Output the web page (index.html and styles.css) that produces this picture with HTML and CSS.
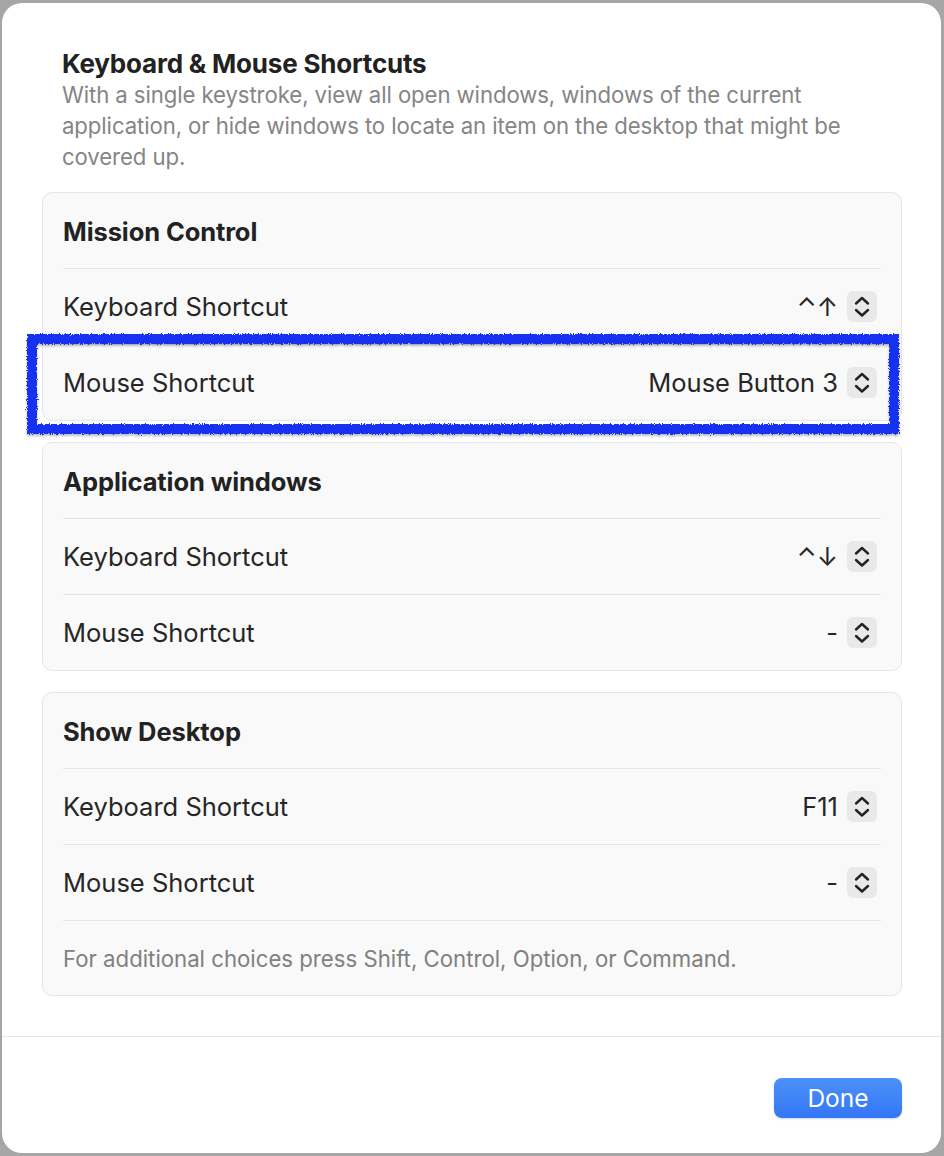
FILE: index.html
```html
<!DOCTYPE html>
<html>
<head>
<meta charset="utf-8">
<link rel="stylesheet" href="styles.css">
</head>
<body>
<svg class="defs" width="0" height="0" aria-hidden="true">
  <filter id="rough" x="-5%" y="-20%" width="110%" height="140%">
    <feTurbulence type="fractalNoise" baseFrequency="0.9" numOctaves="2" seed="3" result="noise"/>
    <feDisplacementMap in="SourceGraphic" in2="noise" scale="5" xChannelSelector="R" yChannelSelector="G"/>
  </filter>
  <symbol id="chev" viewBox="0 0 30 31">
    <path d="M9 12.5 L15 7 L21 12.5" fill="none" stroke="#222" stroke-width="2.4" stroke-linecap="round" stroke-linejoin="round"/>
    <path d="M9 19 L15 24.5 L21 19" fill="none" stroke="#222" stroke-width="2.4" stroke-linecap="round" stroke-linejoin="round"/>
  </symbol>
</svg>
<div class="dialog">
  <div class="content">
    <div class="intro">
      <h1 class="title">Keyboard &amp; Mouse Shortcuts</h1>
      <p class="desc">With a single keystroke, view all open windows, windows of the current application, or hide windows to locate an item on the desktop that might be covered up.</p>
    </div>

    <section class="group">
      <div class="row header">Mission Control</div>
      <div class="row">
        <span class="label">Keyboard Shortcut</span>
        <span class="control"><span class="value">⌃↑</span><span class="stepper"><svg width="30" height="31"><use href="#chev"/></svg></span></span>
      </div>
      <div class="row">
        <span class="label">Mouse Shortcut</span>
        <span class="control"><span class="value">Mouse Button 3</span><span class="stepper"><svg width="30" height="31"><use href="#chev"/></svg></span></span>
      </div>
    </section>

    <section class="group">
      <div class="row header">Application windows</div>
      <div class="row">
        <span class="label">Keyboard Shortcut</span>
        <span class="control"><span class="value">⌃↓</span><span class="stepper"><svg width="30" height="31"><use href="#chev"/></svg></span></span>
      </div>
      <div class="row">
        <span class="label">Mouse Shortcut</span>
        <span class="control"><span class="value">-</span><span class="stepper"><svg width="30" height="31"><use href="#chev"/></svg></span></span>
      </div>
    </section>

    <section class="group">
      <div class="row header">Show Desktop</div>
      <div class="row">
        <span class="label">Keyboard Shortcut</span>
        <span class="control"><span class="value">F11</span><span class="stepper"><svg width="30" height="31"><use href="#chev"/></svg></span></span>
      </div>
      <div class="row">
        <span class="label">Mouse Shortcut</span>
        <span class="control"><span class="value">-</span><span class="stepper"><svg width="30" height="31"><use href="#chev"/></svg></span></span>
      </div>
      <div class="row note">For additional choices press Shift, Control, Option, or Command.</div>
    </section>
  </div>

  <div class="footer">
    <button class="done">Done</button>
  </div>

  <div class="highlight"></div>
</div>
</body>
</html>
```

FILE: styles.css
```css
html, body {
  margin: 0;
  padding: 0;
}

body {
  width: 944px;
  height: 1156px;
  overflow: hidden;
  background: #a6a6a6;
  font-family: Inter, "Noto Sans", "Liberation Sans", sans-serif;
  color: #262626;
}

.defs {
  position: absolute;
  width: 0;
  height: 0;
}

.dialog {
  position: relative;
  margin: 3px 3px 0 2px;
  height: 1150px;
  background: #ffffff;
  border-radius: 20px;
  display: flex;
  flex-direction: column;
  box-sizing: border-box;
}

.content {
  padding: 45px 39px 0 40px;
  display: flex;
  flex-direction: column;
  gap: 21px;
}

.intro {
  padding: 0 20px;
  margin-bottom: -1px;
}

.title {
  margin: 0;
  font-size: 26px;
  line-height: 31px;
  font-weight: 700;
  letter-spacing: -0.2px;
  color: #222;
}

.desc {
  margin: 0;
  font-size: 22.2px;
  line-height: 31px;
  color: #858585;
  letter-spacing: -0.1px;
}

.group {
  background: #f9f9f9;
  border: 1px solid #e6e6e6;
  border-radius: 10px;
}

.row {
  margin: 0 20px;
  height: 76px;
  border-top: 1px solid #e4e4e4;
  display: flex;
  align-items: center;
  justify-content: space-between;
  font-size: 25.5px;
  color: #262626;
  box-sizing: border-box;
}

.row.header {
  height: 75px;
  border-top: none;
  font-weight: 700;
  font-size: 25.5px;
  letter-spacing: -0.1px;
  color: #222;
  padding-top: 2px;
}

.row.note {
  height: 75px;
  font-size: 22.2px;
  color: #808080;
}

.control {
  display: flex;
  align-items: center;
  gap: 9px;
  padding-right: 4px;
}

.value {
  font-size: 25.5px;
  color: #262626;
}

.stepper {
  width: 30px;
  height: 31px;
  background: #e9e9e9;
  border-radius: 6px;
  display: block;
}

.stepper svg {
  display: block;
}

.footer {
  margin-top: 40px;
  border-top: 1px solid #e8e8e8;
  padding: 41px 39px 0 0;
  display: flex;
  justify-content: flex-end;
}

.done {
  width: 128px;
  height: 40px;
  border: none;
  border-radius: 8px;
  background: linear-gradient(#4b91f8, #3476f5);
  color: #fff;
  font-family: Inter, "Noto Sans", sans-serif;
  font-size: 24.5px;
  padding: 0;
  box-shadow: 0 1px 2px rgba(40, 90, 200, 0.25);
}

.highlight {
  position: absolute;
  left: 25px;
  top: 331px;
  width: 872px;
  height: 100px;
  box-sizing: border-box;
  border: 10px solid #1631f0;
  filter: url(#rough) drop-shadow(0 2px 1px rgba(0, 0, 0, 0.25));
}
```
